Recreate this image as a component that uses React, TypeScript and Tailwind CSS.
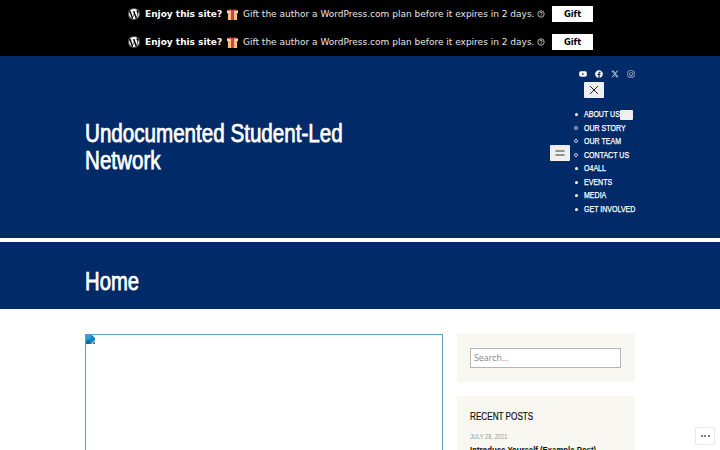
import { FaFacebook, FaInstagram, FaWordpress, FaYoutube } from 'react-icons/fa';
import { FaXTwitter } from 'react-icons/fa6';

const sans = "font-['Liberation_Sans',Arial,sans-serif]";

const menu = [
  { label: 'ABOUT US', toggle: true },
  { label: 'OUR STORY', nested: true },
  { label: 'OUR TEAM', nested: true },
  { label: 'CONTACT US', nested: true },
  { label: 'O4ALL' },
  { label: 'EVENTS' },
  { label: 'MEDIA' },
  { label: 'GET INVOLVED' },
];

function GiftIcon() {
  return (
    <svg viewBox="0 0 12 12" className="h-[11px] w-[11px] shrink-0">
      <path d="M1 4h10v8H1z" fill="#f3bd7a" />
      <path d="M0 1.500h12v3H0z" fill="#ffd9a0" />
      <path d="M4.400 1.500h3.200V12H4.400z" fill="#d8394b" />
      <path d="M6 2.500C4 2.800 2 2 2.400.8 3-.2 5.300.4 6 2c.7-1.600 3-2.200 3.600-1.200C10 2 8 2.800 6 2.500z" fill="#e34a55" />
    </svg>
  );
}

function GiftBanner() {
  return (
    <div className="flex h-7 items-center bg-black pl-32 font-['DejaVu_Sans',sans-serif] text-[9px] whitespace-nowrap text-white">
      <FaWordpress className="h-3 w-3 shrink-0" />
      <strong className="ml-[5px] w-[82px] pt-px font-bold">Enjoy this site?</strong>
      <GiftIcon />
      <span className="ml-[5px] w-[294px] pt-px text-[#e6e6e6]">
        Gift the author a WordPress.com plan before it expires in 2 days.
      </span>
      <svg viewBox="0 0 8 8" className="h-2 w-2 shrink-0" fill="none" stroke="#ddd" strokeWidth="0.8">
        <circle cx="4" cy="4" r="3.2" />
        <path d="M2.900 3.300c0-1.500 2.300-1.400 2.300 0 0 .8-1.200.7-1.200 1.500M4 5.300v.8" />
      </svg>
      <button className="ml-[7px] h-4 w-[41px] bg-white text-[8.300px] leading-none font-bold text-black">Gift</button>
    </div>
  );
}

function Header() {
  return (
    <header className="flex h-[182px] bg-[#002a68] pl-[85px] text-white">
      <h1
        className={`mt-[64px] w-[465px] origin-left scale-x-[0.824] text-[25px] leading-[27px] font-normal [-webkit-text-stroke:0.750px_white] ${sans}`}
      >
        Undocumented Student-Led
        <br />
        Network
      </h1>
      <button className="mt-[89px] flex h-[15.500px] w-5 items-center justify-center rounded-[1px] bg-[#efefef]">
        <svg viewBox="0 0 10 6" className="h-1.5 w-[10px]" stroke="#333" strokeWidth="1">
          <path d="M0.500 1h9M0.500 5h9" />
        </svg>
      </button>
      <div className="ml-[14px] pt-[14px]">
        <div className="-ml-[5px] flex gap-2">
          <FaYoutube className="h-2 w-2" />
          <FaFacebook className="h-2 w-2" />
          <FaXTwitter className="h-2 w-2 opacity-80" />
          <FaInstagram className="h-2 w-2 opacity-80" />
        </div>
        <button className="mt-[3.500px] flex h-4 w-5 items-center justify-center rounded-[1px] bg-[#efefef]">
          <svg viewBox="0 0 8 8" className="h-2 w-2" stroke="#222" strokeWidth="1">
            <path d="M0 0l8 8M8 0L0 8" />
          </svg>
        </button>
        <ul className={`mt-[10px] -ml-[10px] text-[8.500px] whitespace-nowrap [-webkit-text-stroke:0.250px_white] ${sans}`}>
          {menu.map((item) => (
            <li key={item.label} className="flex h-[13.600px] items-center">
              <span
                className={
                  item.nested
                    ? 'mr-[6px] h-1 w-1 rounded-full border border-white/75'
                    : 'mr-[6.500px] ml-[0.500px] h-[3px] w-[3px] rounded-full bg-white'
                }
              />
              <span className={item.toggle ? 'w-[36px]' : ''}>
                <span className="inline-block origin-left scale-x-[0.828]">{item.label}</span>
              </span>
              {item.toggle ? <button className="mt-px h-[10px] w-[13px] shrink-0 rounded-[1px] bg-[#efefef]" /> : null}
            </li>
          ))}
        </ul>
      </div>
    </header>
  );
}

export default function App() {
  return (
    <div className="relative h-[450px] overflow-hidden bg-white">
      <GiftBanner />
      <GiftBanner />
      <Header />
      <div className="mt-1 h-[67px] bg-[#002a68] pt-[26px] pl-[85px]">
        <h2
          className={`origin-left scale-x-[0.811] text-[25px] leading-[27px] font-normal text-white [-webkit-text-stroke:0.750px_white] ${sans}`}
        >
          Home
        </h2>
      </div>
      <main className="flex gap-[14px] pt-[25px] pl-[85px]">
        <div className="h-[240px] w-[357.500px] border border-[#5b9dc9]">
          <svg viewBox="0 0 9 9" className="h-[9px] w-[9px]">
            <path d="M0 0h6l3 3v2L5 9H0z" fill="#1684c2" />
            <path d="M0 0h6L4 4 0 5z" fill="#3a9bd0" />
            <path d="M0 7l3-2 2 4H0z" fill="#12659c" />
            <path d="M9 6v3H6z" fill="#3c7f86" />
          </svg>
        </div>
        <aside className="flex w-[178.500px] flex-col gap-[14px]">
          <div className="h-[48px] bg-[#f8f7f2] px-[13.500px] pt-[14px]">
            <input
              placeholder="Search…"
              className="block h-5 w-[151px] border border-[#b5b5b5] bg-white px-[3px] font-['Open_Sans',sans-serif] text-[8.800px] placeholder:text-[#888]"
            />
          </div>
          <div className={`h-[180px] bg-[#f8f7f2] px-[13.500px] pt-[14px] whitespace-nowrap ${sans}`}>
            <h3 className="origin-left scale-x-[0.815] text-[10px] leading-[14px] text-[#111] [-webkit-text-stroke:0.200px_#111]">
              RECENT POSTS
            </h3>
            <p className="mt-[6.500px] origin-left scale-x-[0.820] text-[7px] leading-[11px] text-[#999]">JULY 28, 2021</p>
            <p className="mt-[2px] origin-left scale-x-[0.845] text-[9.200px] leading-[13px] font-bold text-[#111]">
              Introduce Yourself (Example Post)
            </p>
          </div>
        </aside>
      </main>
      <button className="absolute top-[427px] left-[695px] flex h-[18px] w-5 items-center justify-center gap-[1.500px] rounded-[2px] border border-[#e8e8e8] bg-white">
        <span className="h-[2px] w-[2px] rounded-full bg-[#555]" />
        <span className="h-[2px] w-[2px] rounded-full bg-[#555]" />
        <span className="h-[2px] w-[2px] rounded-full bg-[#555]" />
      </button>
    </div>
  );
}
